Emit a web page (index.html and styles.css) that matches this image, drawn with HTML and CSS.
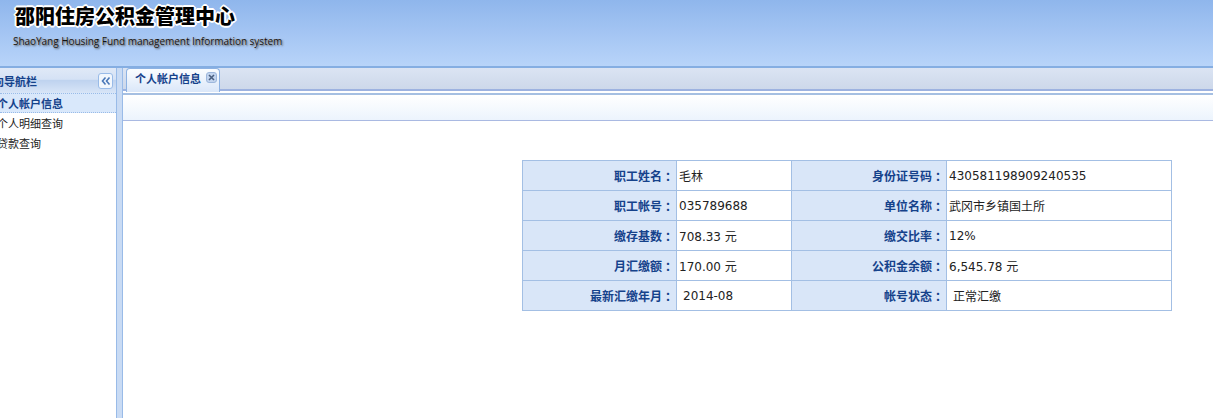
FILE: index.html
```html
<!DOCTYPE html>
<html lang="zh">
<head>
<meta charset="utf-8">
<title>邵阳住房公积金管理中心</title>
<link rel="stylesheet" href="styles.css">
</head>
<body>
<header class="banner">
  <h1 class="brand">邵阳住房公积金管理中心</h1>
  <p class="brand-en">ShaoYang Housing Fund management Information system</p>
</header>
<div class="workspace">
  <aside class="nav">
    <div class="nav-head">
      <span class="nav-title">向导航栏</span>
      <button class="collapse" type="button" aria-label="收起">
        <svg width="12" height="10" viewBox="0 0 12 10"><path d="M5.500 1.500 2.500 5l3 3.500M9.500 1.500 6.500 5l3 3.500" fill="none" stroke="#4a78b8" stroke-width="1.600"/></svg>
      </button>
    </div>
    <ul class="nav-list">
      <li class="nav-item active">个人帐户信息</li>
      <li class="nav-item">个人明细查询</li>
      <li class="nav-item">贷款查询</li>
    </ul>
  </aside>
  <div class="splitter"></div>
  <main class="main">
    <div class="tabs">
      <div class="tab">
        <span class="tab-label">个人帐户信息</span>
        <span class="tab-close">
          <svg width="7" height="7" viewBox="0 0 7 7"><path d="M1 1l5 5M6 1 1 6" stroke="#4a5f80" stroke-width="1.600" fill="none"/></svg>
        </span>
      </div>
    </div>
    <div class="toolbar"></div>
    <div class="content">
      <table class="info">
        <tr><th>职工姓名<span class="colon">：</span></th><td>毛林</td><th>身份证号码<span class="colon">：</span></th><td>430581198909240535</td></tr>
        <tr><th>职工帐号<span class="colon">：</span></th><td>035789688</td><th>单位名称<span class="colon">：</span></th><td>武冈市乡镇国土所</td></tr>
        <tr><th>缴存基数<span class="colon">：</span></th><td>708.33 元</td><th>缴交比率<span class="colon">：</span></th><td>12%</td></tr>
        <tr><th>月汇缴额<span class="colon">：</span></th><td>170.00 元</td><th>公积金余额<span class="colon">：</span></th><td>6,545.78 元</td></tr>
        <tr><th>最新汇缴年月<span class="colon">：</span></th><td class="pad">2014-08</td><th>帐号状态<span class="colon">：</span></th><td class="pad">正常汇缴</td></tr>
      </table>
    </div>
  </main>
</div>
</body>
</html>
```

FILE: styles.css
```css
* { box-sizing: border-box; }
html, body { height: 100%; }
body {
  margin: 0;
  height: 418px;
  overflow: hidden;
  display: flex;
  flex-direction: column;
  background: #fff;
  font: 12px "DejaVu Sans", "Noto Sans CJK SC", sans-serif;
  color: #222;
}
.banner {
  height: 66px;
  flex: none;
  padding: 4px 0 0 15px;
  background: linear-gradient(#8fb6ec 0, #a4c5f3 50%, #b8d4f9 100%);
}
.brand {
  margin: 0;
  font: 900 20px/24px "Noto Sans CJK SC", sans-serif;
  color: #000;
  text-shadow: -2px 0 #fff, 2px 0 #fff, 0 -2px #fff, 0 2px #fff, -1px -1px #fff, 1px 1px #fff, 1px -1px #fff, -1px 1px #fff;
}
.brand-en {
  margin: 6px 0 0 -2px;
  font: 10px/14px "Open Sans", sans-serif;
  letter-spacing: -0.04px;
  color: #111;
  white-space: nowrap;
  text-shadow: 1px 1px 2px #444, 0 0 1px #fff;
}
.workspace {
  flex: 1;
  display: flex;
  min-height: 0;
  border-top: 2px solid #85aee2;
  background: #d2e0f2;
}
.nav {
  width: 117px;
  flex: none;
  background: #fff;
  border-right: 1px solid #99bbe8;
  overflow: hidden;
}
.nav-head {
  height: 25px;
  display: flex;
  align-items: center;
  justify-content: space-between;
  padding: 0 3px 0 0;
  background: linear-gradient(#e0e9f7 0, #d5e2f5 45%, #bfd3ef 50%, #d8e5f7 100%);
}
.nav-title {
  margin-left: -7px;
  font-size: 11px;
  font-weight: 700;
  font-family: "Noto Sans CJK SC", sans-serif;
  color: #15428b;
}
.collapse {
  width: 15px;
  height: 16px;
  padding: 0;
  display: flex;
  align-items: center;
  justify-content: center;
  background: #f2f7fd;
  border: 1px solid #99bbe8;
  border-radius: 3px;
}
.nav-list { margin: 0; padding: 0; list-style: none; }
.nav-item {
  height: 20px;
  line-height: 20px;
  margin-left: -3px;
  font-size: 11px;
  font-family: "Noto Sans CJK SC", sans-serif;
  color: #222;
  white-space: nowrap;
}
.nav-item.active {
  margin-left: 0;
  line-height: 18px;
  text-indent: -3px;
  background: #d9e8fb;
  color: #15428b;
  font-weight: 700;
  border-top: 1px dotted #99bbe8;
  border-bottom: 1px dotted #99bbe8;
}
.splitter {
  width: 6px;
  flex: none;
  background: #c9dbf4;
  border-right: 1px solid #99bbe8;
}
.main {
  flex: 1;
  min-width: 0;
  display: flex;
  flex-direction: column;
  background: #fff;
}
.tabs {
  height: 25px;
  flex: none;
  display: flex;
  align-items: flex-end;
  padding-left: 3px;
  background: linear-gradient(#dbe4f3 0, #cdd8ea 92%, #9db2e0 92%);
  border-bottom: 2px solid #fff;
}
.tab {
  height: 24px;
  margin-bottom: -1px;
  display: flex;
  align-items: center;
  gap: 5px;
  padding: 0 2px 6px 8px;
  border: 1px solid #8db2e3;
  border-bottom: 0;
  border-radius: 4px 4px 0 0;
  background: linear-gradient(#fbfdff, #dae7f9);
}
.tab-label {
  font-size: 11px;
  font-weight: 700;
  font-family: "Noto Sans CJK SC", sans-serif;
  color: #15428b;
}
.tab-close {
  width: 11px;
  height: 11px;
  display: flex;
  align-items: center;
  justify-content: center;
  background: #c3d5ef;
  border: 1px solid #9db7dc;
  border-radius: 3px;
}
.toolbar {
  height: 28px;
  flex: none;
  background: linear-gradient(#a5bfe2 0, #a5bfe2 2px, #fff 2px, #ecf4fd);
  border-bottom: 1px solid #a9b9e2;
}
.content {
  flex: 1;
  padding: 39px 0 0 399px;
}
.info {
  width: 650px;
  table-layout: fixed;
  border-collapse: collapse;
  border: 1px solid #99bbe8;
}
.info th, .info td {
  height: 30px;
  padding: 0;
  border: 1px solid #a3bfe4;
  white-space: nowrap;
}
.info th {
  width: 154px;
  padding-right: 2px;
  text-align: right;
  background: #d9e6f8;
  color: #15428b;
  font-weight: 700;
  font-family: "Noto Sans CJK SC", sans-serif;
}
.info th:nth-child(3) { width: 155px; }
.colon {
  margin-left: 3px;
  margin-right: -3px;
}
.info td { padding-left: 2px; }
.info td:nth-child(2) { width: 115px; }
.info td.pad { padding-left: 6px; }
```
